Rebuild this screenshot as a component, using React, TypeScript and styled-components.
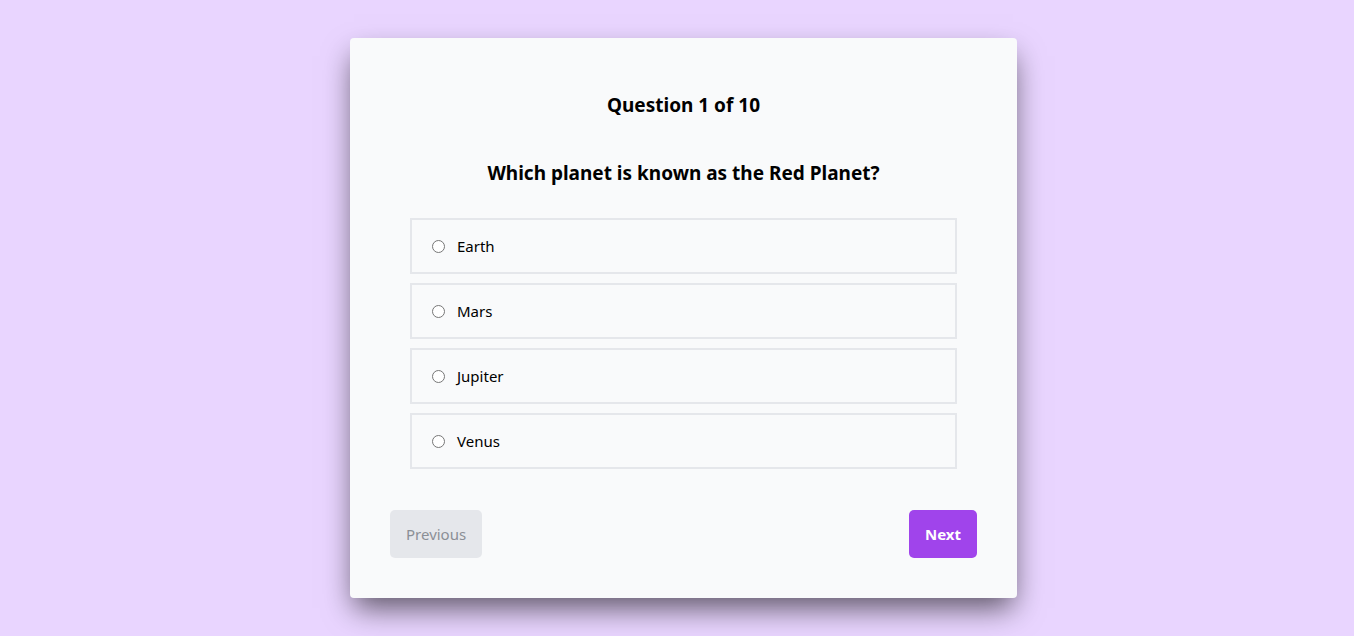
import React, { useState } from "react";
import styled, { createGlobalStyle } from "styled-components";

const Global = createGlobalStyle`
  html, body { margin: 0; padding: 0; }
  body {
    background: #e9d5ff;
    font-family: "Noto Sans", "Open Sans", sans-serif;
    color: #000;
  }
`;

const Page = styled.div`
  min-height: 636px;
  padding-left: 13px;
  box-sizing: border-box;
  display: flex;
  align-items: center;
  justify-content: center;
`;

const Card = styled.div`
  width: 667px;
  box-sizing: border-box;
  padding: 40px;
  background: #f9fafb;
  border-radius: 4px;
  box-shadow: 0 14px 28px -4px rgba(0, 0, 0, 0.6);
  display: flex;
  flex-direction: column;
`;

const Title = styled.h2`
  margin: 13px 0 0;
  font-size: 19px;
  line-height: 28px;
  font-weight: 700;
  text-align: center;
`;

const Question = styled.h3`
  margin: 40px 0 0;
  font-size: 19px;
  line-height: 28px;
  font-weight: 700;
  text-align: center;
`;

const Options = styled.div`
  margin: 31px 20px 0;
  display: flex;
  flex-direction: column;
  gap: 9px;
`;

const Option = styled.label`
  height: 56px;
  box-sizing: border-box;
  border: 2px solid #e5e7eb;
  display: flex;
  align-items: center;
  padding: 0 20px;
  gap: 12px;
  font-size: 15px;
  cursor: pointer;
`;

const Radio = styled.input`
  margin: 0;
  width: 13px;
  height: 13px;
`;

const Footer = styled.div`
  margin-top: 41px;
  display: flex;
  justify-content: space-between;
`;

const Button = styled.button<{ $primary?: boolean }>`
  height: 48px;
  padding: 0 16px;
  border: none;
  border-radius: 5px;
  font-family: "Noto Sans", "Open Sans", sans-serif;
  font-size: 15px;
  font-weight: ${(p) => (p.$primary ? 700 : 400)};
  background: ${(p) => (p.$primary ? "#a044eb" : "#e5e7eb")};
  color: ${(p) => (p.$primary ? "#fff" : "#8b8f96")};
  cursor: pointer;
`;

const answers = ["Earth", "Mars", "Jupiter", "Venus"];

export default function App() {
  const [sel, setSel] = useState<string | null>(null);
  return (
    <>
      <Global />
      <Page>
        <Card>
          <Title>Question 1 of 10</Title>
          <Question>Which planet is known as the Red Planet?</Question>
          <Options>
            {answers.map((a) => (
              <Option key={a}>
                <Radio
                  type="radio"
                  name="answer"
                  checked={sel === a}
                  onChange={() => setSel(a)}
                />
                {a}
              </Option>
            ))}
          </Options>
          <Footer>
            <Button>Previous</Button>
            <Button $primary>Next</Button>
          </Footer>
        </Card>
      </Page>
    </>
  );
}
